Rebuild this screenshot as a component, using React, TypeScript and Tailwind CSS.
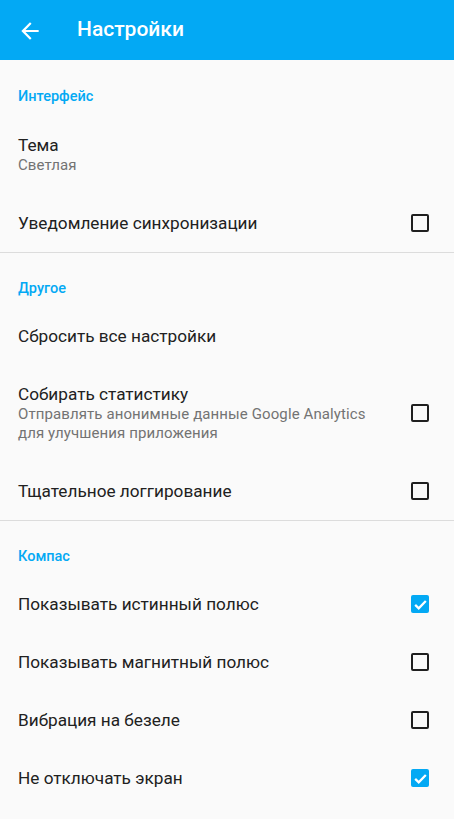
import React from 'react';

type Row =
  | { kind: 'header'; title: string; first?: boolean }
  | { kind: 'item'; title: string; summary?: string; checkbox?: boolean; checked?: boolean };

const rows: Row[] = [
  { kind: 'header', title: 'Интерфейс', first: true },
  { kind: 'item', title: 'Тема', summary: 'Светлая' },
  { kind: 'item', title: 'Уведомление синхронизации', checkbox: true },
  { kind: 'header', title: 'Другое' },
  { kind: 'item', title: 'Сбросить все настройки' },
  {
    kind: 'item',
    title: 'Собирать статистику',
    summary: 'Отправлять анонимные данные Google Analytics для улучшения приложения',
    checkbox: true,
  },
  { kind: 'item', title: 'Тщательное логгирование', checkbox: true },
  { kind: 'header', title: 'Компас' },
  { kind: 'item', title: 'Показывать истинный полюс', checkbox: true, checked: true },
  { kind: 'item', title: 'Показывать магнитный полюс', checkbox: true },
  { kind: 'item', title: 'Вибрация на безеле', checkbox: true },
  { kind: 'item', title: 'Не отключать экран', checkbox: true, checked: true },
];

function Checkbox({ checked }: { checked?: boolean }) {
  if (checked) {
    return (
      <div className="flex h-[18px] w-[18px] items-center justify-center rounded-[2px] bg-[#03a9f4]">
        <svg viewBox="0 0 24 24" className="h-[17px] w-[17px]" fill="none" stroke="#fff" strokeWidth="3.2">
          <path d="M4.5 12.5l5 5L19.5 7" />
        </svg>
      </div>
    );
  }
  return <div className="h-[18px] w-[18px] rounded-[2px] border-2 border-[#1f1f1f]" />;
}

export default function App() {
  return (
    <div className="min-h-[819px] w-[454px] bg-[#fafafa] font-['Roboto',sans-serif]">
      <div className="flex h-[60px] items-center bg-[#03a9f4]">
        <div className="ml-[17px] mt-[2px] w-[60px]">
          <svg viewBox="0 0 24 24" className="h-[26px] w-[26px]" fill="#fff">
            <path d="M20 11H7.83l5.59-5.59L12 4l-8 8 8 8 1.41-1.41L7.83 13H20v-2z" />
          </svg>
        </div>
        <h1 className="text-[21px] font-medium text-white">Настройки</h1>
      </div>

      {rows.map((row, i) => {
        if (row.kind === 'header') {
          return (
            <div
              key={i}
              className={`${row.first ? 'h-[56px] pt-[27px]' : 'h-[55px] border-t border-[#dcdcdc] pt-[26px]'} flex items-start px-[18px]`}
            >
              <span className="text-[14.5px] leading-[20px] font-medium text-[#03a9f4]">{row.title}</span>
            </div>
          );
        }
        if (row.summary) {
          return (
            <div key={i} className="flex items-center px-[18px] pt-[18px] pb-[19px]">
              <div className="flex-1 pr-[30px]">
                <div className="text-[17.2px] leading-[22px] text-[#212121]">{row.title}</div>
                <div className="text-[15px] leading-[19px] tracking-[0.1px] text-[#737373]">{row.summary}</div>
              </div>
              {row.checkbox && (
                <div className="mr-[7px]">
                  <Checkbox checked={row.checked} />
                </div>
              )}
            </div>
          );
        }
        return (
          <div key={i} className="flex h-[58px] items-center px-[18px]">
            <div className="flex-1 text-[17.2px] leading-[22px] text-[#212121]">{row.title}</div>
            {row.checkbox && (
              <div className="mr-[7px]">
                <Checkbox checked={row.checked} />
              </div>
            )}
          </div>
        );
      })}
    </div>
  );
}
